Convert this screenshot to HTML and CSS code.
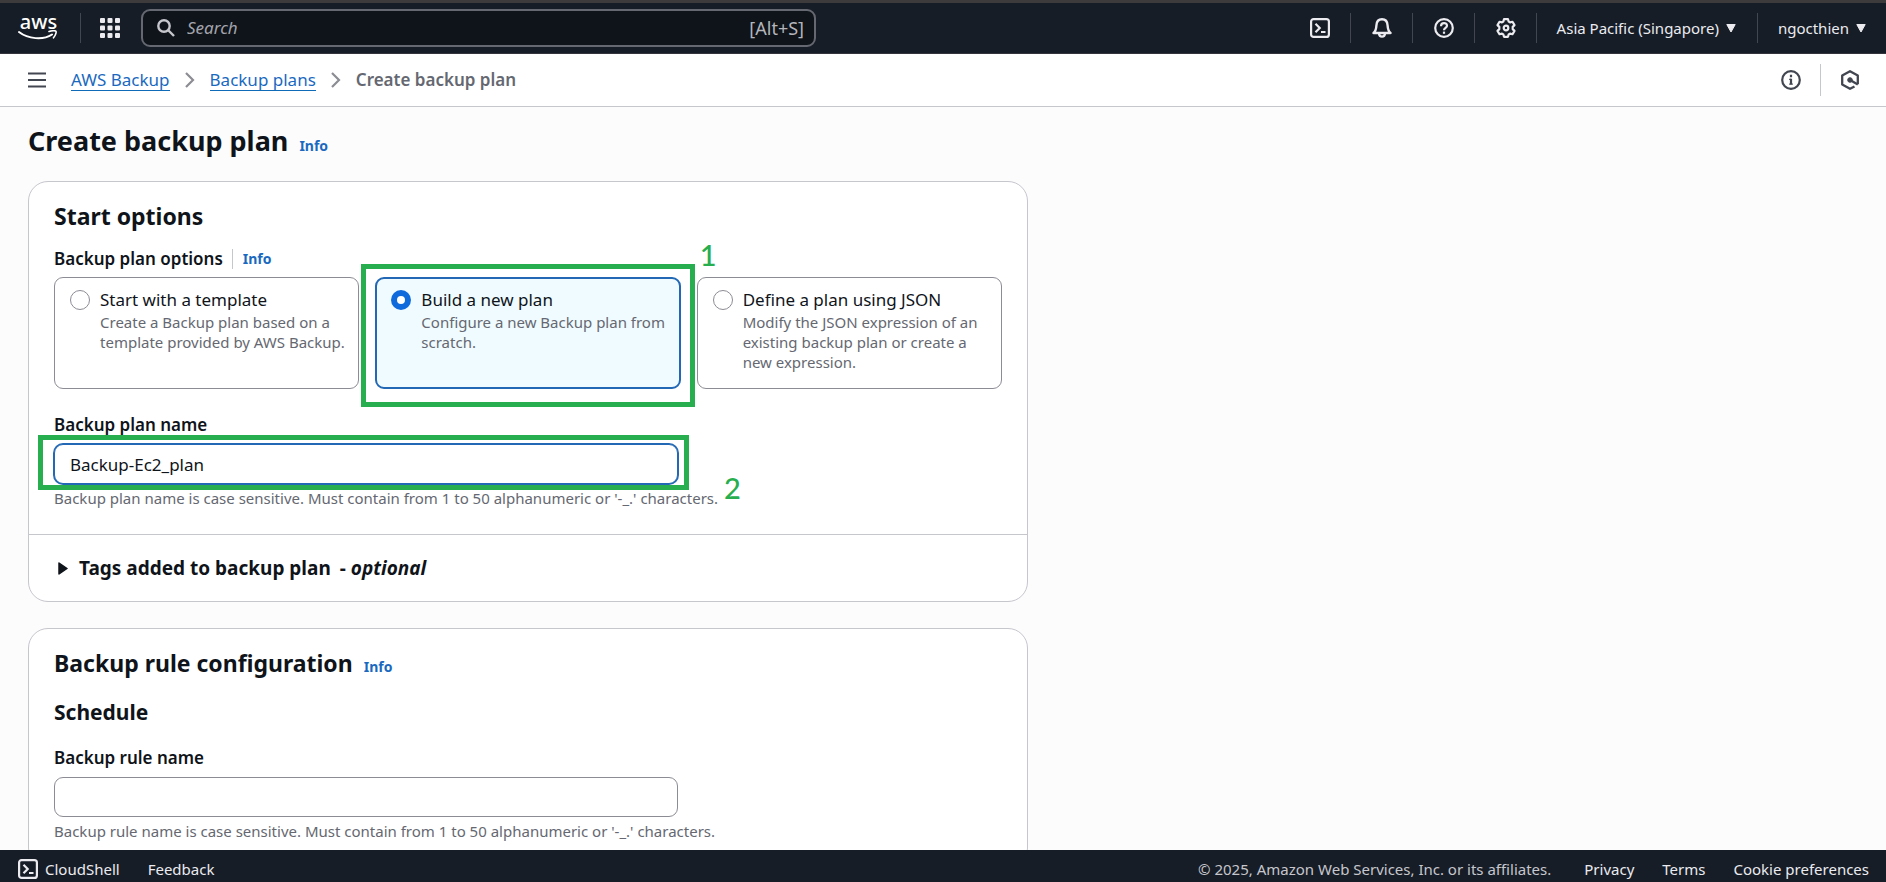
FILE: index.html
```html
<!DOCTYPE html>
<html lang="en">
<head>
<meta charset="utf-8">
<title>Create backup plan | AWS Backup</title>
<link rel="stylesheet" href="styles.css">
</head>
<body>
<header class="topnav">
  <a class="logo" href="#" aria-label="AWS home">
    <span class="logo-text">aws</span>
    <svg class="logo-smile" viewBox="0 0 40 11" aria-hidden="true"><path d="M1 2c9 7 24 8.500 33 2.500" fill="none" stroke="currentColor" stroke-width="2" stroke-linecap="round"/><path d="M31 1.500c3-1 6.500-1 7-.2s-.5 4-2.500 6.500" fill="none" stroke="currentColor" stroke-width="1.600" stroke-linecap="round"/></svg>
  </a>
  <span class="sep"></span>
  <button class="icon-btn waffle" aria-label="Services">
    <svg viewBox="0 0 20 20" width="20" height="20" fill="currentColor"><rect width="5" height="5" rx="1"/><rect x="7.500" width="5" height="5" rx="1"/><rect x="15" width="5" height="5" rx="1"/><rect y="7.500" width="5" height="5" rx="1"/><rect x="7.500" y="7.500" width="5" height="5" rx="1"/><rect x="15" y="7.500" width="5" height="5" rx="1"/><rect y="15" width="5" height="5" rx="1"/><rect x="7.500" y="15" width="5" height="5" rx="1"/><rect x="15" y="15" width="5" height="5" rx="1"/></svg>
  </button>
  <div class="search">
    <svg viewBox="0 0 18 18" width="18" height="18" fill="none" stroke="currentColor" stroke-width="2.400"><circle cx="7" cy="7" r="5.700"/><path d="M11 11l6 6"/></svg>
    <input type="text" placeholder="Search" aria-label="Search">
    <span class="shortcut">[Alt+S]</span>
  </div>
  <div class="tools">
    <button class="icon-btn tool" aria-label="CloudShell">
      <svg viewBox="0 0 20 20" width="20" height="20" fill="none" stroke="currentColor" stroke-width="2.200"><rect x="1.100" y="1.100" width="17.800" height="17.800" rx="2.500"/><path d="M5.500 5.800l4.200 4.200-4.200 4.200M11 14h4.500"/></svg>
    </button>
    <span class="sep"></span>
    <button class="icon-btn tool" aria-label="Notifications">
      <svg viewBox="0 0 20 20" width="20" height="20" fill="none" stroke="currentColor" stroke-width="2.400" stroke-linejoin="round"><path d="M1.500 15c2.500-2 2.700-4 2.900-7.500C4.600 4 6.500 1.300 10 1.300S15.400 4 15.600 7.500c.2 3.500.4 5.500 2.900 7.500z"/><path d="M7 15.500c.3 4.200 5.700 4.200 6 0"/></svg>
    </button>
    <span class="sep"></span>
    <button class="icon-btn tool" aria-label="Help">
      <svg viewBox="0 0 20 20" width="20" height="20" fill="none" stroke="currentColor" stroke-width="2.200"><circle cx="10" cy="10" r="8.800"/><path d="M7 8.200C7 4 13 4.200 13 7.700c0 2.200-3 2.200-3 4.600"/><path d="M10 13.600v2.200"/></svg>
    </button>
    <span class="sep"></span>
    <button class="icon-btn tool" aria-label="Settings">
      <svg viewBox="0 0 20 20" width="20" height="20" fill="none" stroke="currentColor" stroke-width="2.200" stroke-linejoin="round"><path d="M8 1.200h4l.7 2.400 1.300.8 2.500-.6 2 3.300-1.800 1.800v2.200l1.800 1.800-2 3.300-2.500-.6-1.300.8-.7 2.400H8l-.7-2.400-1.300-.8-2.500.6-2-3.300 1.800-1.800V8.900L1.500 7.100l2-3.300 2.500.6 1.300-.8z"/><circle cx="10" cy="10" r="2.300"/></svg>
    </button>
    <span class="sep"></span>
    <button class="menu-btn">Asia Pacific (Singapore)<svg viewBox="0 0 10 9" width="10" height="9" fill="currentColor" aria-hidden="true"><path d="M.8.500h8.400L5 8z" stroke="currentColor" stroke-linejoin="round"/></svg></button>
    <span class="sep"></span>
    <button class="menu-btn">ngocthien<svg viewBox="0 0 10 9" width="10" height="9" fill="currentColor" aria-hidden="true"><path d="M.8.500h8.400L5 8z" stroke="currentColor" stroke-linejoin="round"/></svg></button>
  </div>
</header>

<nav class="crumbs" aria-label="Breadcrumbs">
  <button class="icon-btn burger" aria-label="Open navigation">
    <svg viewBox="0 0 18 16" width="18" height="16" stroke="currentColor" stroke-width="2.200"><path d="M0 1.500h18M0 8h18M0 14.500h18"/></svg>
  </button>
  <ol class="crumb-list">
    <li><a href="#">AWS Backup</a></li>
    <li><svg viewBox="0 0 10 16" width="10" height="16" fill="none" stroke="currentColor" stroke-width="2.200"><path d="M1 1l7 7-7 7"/></svg><a href="#">Backup plans</a></li>
    <li><svg viewBox="0 0 10 16" width="10" height="16" fill="none" stroke="currentColor" stroke-width="2.200"><path d="M1 1l7 7-7 7"/></svg><span class="current">Create backup plan</span></li>
  </ol>
  <div class="panel-tools">
    <button class="icon-btn" aria-label="Info panel">
      <svg viewBox="0 0 20 20" width="20" height="20" fill="none" stroke="currentColor" stroke-width="2.200"><circle cx="10" cy="10" r="8.800"/><path d="M10 4.800v2.400M10 8.800v5.400" stroke-width="2.200"/><path d="M8.200 9.400H10M8.200 14.200h3.600" stroke-width="1.200"/></svg>
    </button>
    <span class="sep light"></span>
    <button class="icon-btn" aria-label="Assistant panel">
      <svg viewBox="0 0 20 20" width="20" height="20" fill="none" stroke="currentColor" stroke-width="2.300" stroke-linejoin="round"><path d="M14.500 16.400L10 18.800l-7.800-4.400V5.600L10 1.200l7.800 4.400v8.600"/><path d="M10.500 10.200l7.300 4.300"/><circle cx="10" cy="10" r="2.300" fill="currentColor" stroke-width="1"/></svg>
    </button>
  </div>
</nav>

<main class="content">
  <div class="column">
    <div class="title-row"><h1>Create backup plan</h1><a class="info" href="#">Info</a></div>

    <section class="card">
      <div class="card-body">
        <h2>Start options</h2>
        <fieldset class="options">
          <legend><span class="label">Backup plan options</span><a class="info divided" href="#">Info</a></legend>
          <div class="tiles">
            <label class="tile"><input type="radio" name="plan"><span class="tile-text"><span class="tile-name">Start with a template</span><span class="desc">Create a Backup plan based on a template provided by AWS Backup.</span></span></label>
            <div class="tile-slot">
              <label class="tile selected"><input type="radio" name="plan" checked><span class="tile-text"><span class="tile-name">Build a new plan</span><span class="desc">Configure a new Backup plan from scratch.</span></span></label>
              <span class="mark mark-tile"></span>
              <span class="mark-number number-one">1</span>
            </div>
            <label class="tile"><input type="radio" name="plan"><span class="tile-text"><span class="tile-name">Define a plan using JSON</span><span class="desc">Modify the JSON expression of an existing backup plan or create a new expression.</span></span></label>
          </div>
        </fieldset>
        <div class="field field-plan">
          <label class="label" for="plan-name">Backup plan name</label>
          <div class="input-slot">
            <input class="text focused" id="plan-name" type="text" value="Backup-Ec2_plan">
            <span class="mark mark-input"></span>
            <span class="mark-number number-two">2</span>
          </div>
          <p class="desc">Backup plan name is case sensitive. Must contain from 1 to 50 alphanumeric or '-_.' characters.</p>
        </div>
      </div>
      <button class="expander" aria-expanded="false">
        <svg viewBox="0 0 10 13" width="10" height="13" fill="currentColor" aria-hidden="true"><path d="M1 1v11l8-5.500z" stroke="currentColor" stroke-width="1.500" stroke-linejoin="round"/></svg>
        <span>Tags added to backup plan</span><span class="optional">- <i>optional</i></span>
      </button>
    </section>

    <section class="card">
      <div class="card-body">
        <div class="heading-row"><h2>Backup rule configuration</h2><a class="info" href="#">Info</a></div>
        <h3>Schedule</h3>
        <div class="field field-rule">
          <label class="label" for="rule-name">Backup rule name</label>
          <div class="input-slot"><input class="text" id="rule-name" type="text"></div>
          <p class="desc">Backup rule name is case sensitive. Must contain from 1 to 50 alphanumeric or '-_.' characters.</p>
        </div>
      </div>
    </section>
  </div>
</main>

<footer class="footer">
  <button class="shell"><svg viewBox="0 0 20 20" width="20" height="20" fill="none" stroke="currentColor" stroke-width="2.200"><rect x="1.100" y="1.100" width="17.800" height="17.800" rx="2.500"/><path d="M5.500 5.800l4.200 4.200-4.200 4.200M11 14h4.500"/></svg>CloudShell</button>
  <a class="feedback" href="#">Feedback</a>
  <span class="copyright">© 2025, Amazon Web Services, Inc. or its affiliates.</span>
  <a href="#">Privacy</a>
  <a href="#">Terms</a>
  <a href="#">Cookie preferences</a>
</footer>
</body>
</html>
```

FILE: styles.css
```css
* { box-sizing: border-box; }

body {
  margin: 0;
  height: 100vh;
  display: flex;
  flex-direction: column;
  overflow: hidden;
  background: #fcfcfd;
  color: #0f141a;
  font: 17px/22px "Noto Sans", "Open Sans", sans-serif;
}

h1, h2, h3, p, ol, fieldset, legend { margin: 0; padding: 0; border: 0; }
button { font: inherit; color: inherit; background: none; border: 0; padding: 0; cursor: pointer; }
input { font: inherit; color: inherit; }
a { text-decoration: none; }
svg { display: block; flex: none; }

.icon-btn { flex: none; }
.sep { flex: none; width: 1px; height: 30px; background: #424650; }

/* Top navigation */
.topnav {
  flex: none;
  display: flex;
  align-items: center;
  height: 54px;
  padding: 0 20px 0 18px;
  border-top: 3px solid #3d3b3c;
  border-bottom: 1px solid #33343c;
  background: #161d26;
  color: #ebebf0;
}
.logo { width: 41px; margin-right: 21px; color: #fff; text-align: center; }
.logo-text { display: block; font-size: 20px; font-weight: 500; line-height: 14px; }
.logo-smile { width: 40px; height: 11px; margin-top: 1px; }
.waffle { margin: 0 21px 0 19px; }
.search {
  flex: 0 1 675px;
  display: flex;
  align-items: center;
  gap: 12px;
  height: 38px;
  padding: 0 10px 0 14px;
  border: 2px solid #656871;
  border-radius: 9px;
  background: #0f141a;
  color: #c6c6cd;
}
.search input {
  flex: 1;
  min-width: 0;
  padding: 0;
  border: 0;
  outline: 0;
  background: none;
}
.search input::placeholder { color: #a4a4ad; font-style: italic; opacity: 1; }
.shortcut { color: #b4b4bb; font-size: 18px; }
.tools { display: flex; align-items: center; margin-left: auto; }
.tool { margin: 0 20px 0 21px; }
.menu-btn { display: flex; align-items: center; gap: 7px; margin: 0 21px 0 20px; font-size: 15px; white-space: nowrap; }
.menu-btn:last-child { margin-right: 0; }

/* Breadcrumb bar */
.crumbs {
  flex: none;
  display: flex;
  align-items: center;
  height: 53px;
  padding: 0 26px 0 28px;
  border-bottom: 1px solid #c6c6cd;
  background: #fff;
  color: #424650;
}
.crumb-list { display: flex; gap: 15px; margin-left: 25px; list-style: none; }
.crumb-list li { display: flex; align-items: center; gap: 15px; color: #8c8c94; }
.crumb-list a { border-bottom: 1px solid #0f6bb8; color: #1a69bf; line-height: 21px; }
.current { color: #656871; font-weight: 600; }
.panel-tools { display: flex; align-items: center; gap: 19px; margin-left: auto; }
.light { height: 32px; background: #c6c6cd; }

/* Page content */
.content { flex: 1; min-height: 0; overflow: hidden; padding: 0 28px; }
.column { max-width: 1000px; }
.title-row, .heading-row { display: flex; align-items: baseline; gap: 11px; }
.title-row { padding: 16px 0 22px; }
h1 { font-size: 27px; line-height: 36px; }
h2 { font-size: 23px; line-height: 30px; }
h3 { margin-top: 20px; font-size: 21px; line-height: 28px; }
.info { color: #1a69bf; font-size: 14px; font-weight: 700; line-height: 20px; }

.card {
  margin-bottom: 26px;
  border: 1px solid #c6c6cd;
  border-radius: 20px;
  background: #fff;
}
.card-body { padding: 19px 25px 26px; }

.label { font-weight: 600; }
.options { margin-top: 17px; min-width: 0; }
.options legend { display: flex; align-items: center; gap: 9px; height: 22px; margin-bottom: 7px; }
.divided { padding-left: 10px; border-left: 1px solid #c6c6cd; }

.tiles { display: grid; grid-template-columns: repeat(3, 1fr); gap: 16px; }
.tile-slot { position: relative; display: grid; }
.tile {
  display: flex;
  gap: 10px;
  padding: 11px 10px 16px 15px;
  border: 1px solid #8c8c94;
  border-radius: 9px;
}
.tile.selected { padding: 10px 9px 15px 14px; border: 2px solid #2268b4; background: #f0fbff; }
.tile input {
  flex: none;
  appearance: none;
  width: 20px;
  height: 20px;
  margin: 1px 0 0;
  border: 1px solid #8c8c94;
  border-radius: 50%;
  background: #fff;
}
.tile input:checked { border: 6px solid #0f6bdc; }
.tile-name { display: block; margin-bottom: 1px; }
.desc { display: block; color: #656871; font-size: 15px; line-height: 20px; }

.field { display: flex; flex-direction: column; align-items: flex-start; }
.field-plan { margin-top: 25px; }
.field-rule { margin-top: 21px; }
.input-slot { position: relative; width: 100%; max-width: 624px; margin: 8px 0 4px; }
.text {
  display: block;
  width: 100%;
  height: 40px;
  padding: 0 15px;
  border: 1px solid #8c8c94;
  border-radius: 9px;
  outline: 0;
  background: #fff;
}
.focused { border-color: #2268b4; box-shadow: 0 0 0 1px #2268b4; }

/* Numbered markers drawn over the form */
.mark { position: absolute; border: 5px solid #27ae4f; pointer-events: none; }
.mark-tile { inset: -13px -14px -18px; }
.mark-input { inset: -9px -11px -6px -16px; }
.mark-number { position: absolute; left: 100%; color: #27ae4f; font: 500 29px/29px Lato, sans-serif; }
.number-one { bottom: 100%; margin: 0 0 8px 19px; }
.number-two { top: 100%; margin: -11px 0 0 46px; }

.expander {
  display: flex;
  align-items: center;
  width: 100%;
  padding: 21px 29px;
  border-top: 1px solid #c6c6cd;
  font-size: 19px;
  font-weight: 700;
  line-height: 24px;
}
.expander svg { margin-right: 11px; }
.optional { margin-left: 9px; }

/* Footer */
.footer {
  flex: none;
  display: flex;
  align-items: center;
  gap: 28px;
  height: 32px;
  padding: 6px 17px 0 18px;
  background: #161d26;
  color: #ebebf0;
  font-size: 15px;
  line-height: 20px;
  white-space: nowrap;
}
.footer a { color: inherit; }
.shell { display: flex; align-items: center; gap: 7px; }
.copyright { margin: 0 5px 0 auto; color: #c6c6cd; }
```
